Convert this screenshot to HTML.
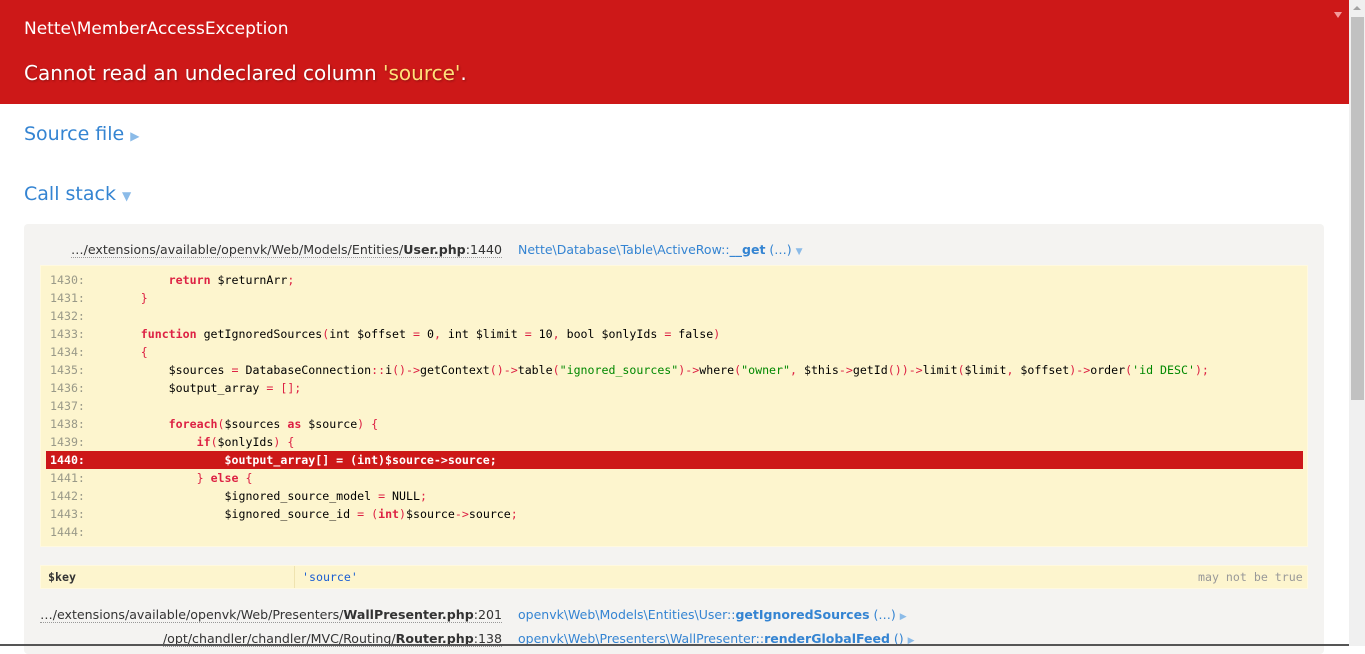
<!DOCTYPE html>
<html><head><meta charset="utf-8"><style>
*{margin:0;padding:0;box-sizing:border-box}
body{width:1365px;height:646px;overflow:hidden;background:#fff;font-family:"DejaVu Sans","Liberation Sans",sans-serif;position:relative;color:#333}
.abs{position:absolute;white-space:pre}
#hdr{position:absolute;left:0;top:0;width:1349px;height:104px;background:#cd1818}
#sb{position:absolute;left:1349px;top:0;width:16px;height:646px;background:#f0f0f0}
#thumb{position:absolute;left:1351px;top:17px;width:13px;height:383px;background:#c1c1c1}
.mono{font-family:"DejaVu Sans Mono","Liberation Mono",monospace;font-size:11.6px}
.k{color:#d24;font-weight:bold}.o{color:#d24}.s{color:#080}.n{color:#998}
.lnk{color:#3484d2}
</style></head><body>
<div id="hdr"></div>
<div class="abs" style="left:24px;top:19px;font-size:17px;color:#fff">Nette\MemberAccessException</div>
<div class="abs" style="left:24px;top:61px;font-size:20px;color:#fff;text-shadow:1px 1px 2px rgba(0,0,0,.3)">Cannot read an undeclared column <span style="color:#ffe17a">'source'</span>.</div>
<div class="abs" style="left:1334px;top:12px;width:0;height:0;border-left:4px solid transparent;border-right:4px solid transparent;border-top:6px solid #f39a9a"></div>
<div id="sb"></div><div id="thumb"></div>
<div class="abs" style="left:1353px;top:6px;width:0;height:0;border-left:4px solid transparent;border-right:4px solid transparent;border-bottom:4px solid #a3a3a3"></div>
<div class="abs lnk" style="left:24px;top:123px;font-size:19px">Source file <span style="font-size:12px;color:#8bbbe8">▶</span></div>
<div class="abs lnk" style="left:24px;top:183px;font-size:19px">Call stack <span style="font-size:12px;color:#8bbbe8">▼</span></div>
<div style="position:absolute;left:24px;top:224px;width:1300px;height:430px;background:#f4f3f1;border-radius:4px"></div>
<div class="abs" style="right:863px;top:242px;font-size:12.6px;color:#333;border-bottom:1px dotted #999">…/extensions/available/openvk/Web/Models/Entities/<b>User.php</b>:1440</div>
<div class="abs lnk" style="left:518px;top:242px;font-size:12.5px">Nette\Database\Table\ActiveRow::<b>__get</b> (…) <span style="font-size:9px;color:#8bbbe8">▼</span></div>
<div style="position:absolute;left:40px;top:265px;width:1268px;height:282px;background:#fdf5ce;border:1px solid #fff9e0"></div>
<div style="position:absolute;left:46px;top:451px;width:1257px;height:18px;background:#cd1818"></div>
<div class="abs mono" style="left:50px;top:271px;line-height:18px;color:#000"><span class="n">1430:</span>            <span class="k">return</span> $returnArr<span class="o">;</span>
<span class="n">1431:</span>        <span class="o">}</span>
<span class="n">1432:</span>
<span class="n">1433:</span>        <span class="k">function</span> getIgnoredSources<span class="o">(</span>int $offset <span class="o">=</span> 0<span class="o">,</span> int $limit <span class="o">=</span> 10<span class="o">,</span> bool $onlyIds <span class="o">=</span> false<span class="o">)</span>
<span class="n">1434:</span>        <span class="o">{</span>
<span class="n">1435:</span>            $sources <span class="o">=</span> DatabaseConnection<span class="o">::</span>i<span class="o">()-></span>getContext<span class="o">()-></span>table<span class="o">(</span><span class="s">"ignored_sources"</span><span class="o">)-></span>where<span class="o">(</span><span class="s">"owner"</span><span class="o">,</span> $this<span class="o">-></span>getId<span class="o">())-></span>limit<span class="o">(</span>$limit<span class="o">,</span> $offset<span class="o">)-></span>order<span class="o">(</span><span class="s">'id DESC'</span><span class="o">);</span>
<span class="n">1436:</span>            $output_array <span class="o">= [];</span>
<span class="n">1437:</span>
<span class="n">1438:</span>            <span class="k">foreach</span><span class="o">(</span>$sources <span class="k">as</span> $source<span class="o">) {</span>
<span class="n">1439:</span>                <span class="k">if</span><span class="o">(</span>$onlyIds<span class="o">) {</span>
<b style="color:#fff">1440:                    $output_array[] = (int)$source->source;</b>
<span class="n">1441:</span>                <span class="o">}</span> <span class="k">else</span> <span class="o">{</span>
<span class="n">1442:</span>                    $ignored_source_model <span class="o">=</span> NULL<span class="o">;</span>
<span class="n">1443:</span>                    $ignored_source_id <span class="o">= (</span><span class="k">int</span><span class="o">)</span>$source<span class="o">-></span>source<span class="o">;</span>
<span class="n">1444:</span></div>
<div style="position:absolute;left:40px;top:565px;width:1268px;height:24px;background:#fdf5ce;border:1px solid #fff9e0"></div>
<div style="position:absolute;left:294px;top:566px;width:1px;height:22px;background:#efe3b0"></div>
<div class="abs mono" style="left:48px;top:570px;font-weight:bold;color:#333">$key</div>
<div class="abs mono" style="left:302px;top:570px;color:#1a5ed3">'source'</div>
<div class="abs mono" style="left:1198px;top:570px;color:#999">may not be true</div>
<div class="abs" style="right:863px;top:607px;font-size:12.6px;color:#333;border-bottom:1px dotted #999">…/extensions/available/openvk/Web/Presenters/<b>WallPresenter.php</b>:201</div>
<div class="abs lnk" style="left:518px;top:607px;font-size:12.5px">openvk\Web\Models\Entities\User::<b>getIgnoredSources</b> (…) <span style="font-size:9px;color:#8bbbe8">▶</span></div>
<div class="abs" style="right:863px;top:631px;font-size:12.6px;color:#333;border-bottom:1px dotted #999">/opt/chandler/chandler/MVC/Routing/<b>Router.php</b>:138</div>
<div class="abs lnk" style="left:518px;top:631px;font-size:12.5px">openvk\Web\Presenters\WallPresenter::<b>renderGlobalFeed</b> () <span style="font-size:9px;color:#8bbbe8">▶</span></div>
<div style="position:absolute;left:0;top:644px;width:1349px;height:2px;background:#555"></div>
</body></html>
